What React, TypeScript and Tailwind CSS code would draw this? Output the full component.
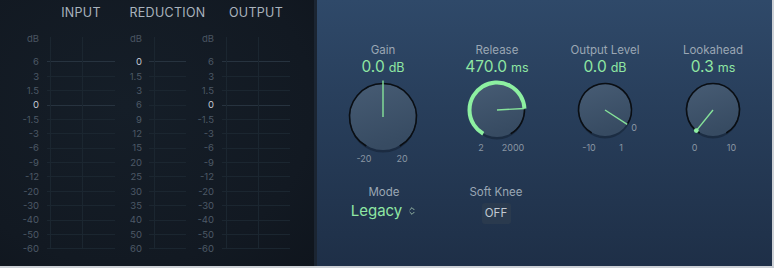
import React from 'react';
import { ChevronsUpDown } from 'lucide-react';

const IO_SCALE = ['6', '3', '1.5', '0', '-1.5', '-3', '-6', '-9', '-12', '-20', '-30', '-40', '-50', '-60'];
const RED_SCALE = ['0', '1.5', '3', '6', '9', '12', '15', '20', '25', '30', '35', '40', '50', '60'];

interface MeterProps {
  label: string;
  scale: string[];
  major: string[];
  zero: string;
  width: number;
  gap: number;
  verticals: number[];
  className?: string;
}

const Meter: React.FC<MeterProps> = ({ label, scale, major, zero, width, gap, verticals, className }) => (
  <div className={`flex flex-col ${className ?? ''}`}>
    <div className="flex h-[15px]">
      <div className="w-[24px] shrink-0" style={{ marginRight: gap }} />
      <div className="flex justify-center whitespace-nowrap text-[12.5px] leading-[15px] tracking-[0.3px] text-[#a9b3bd]" style={{ width }}>{label}</div>
    </div>
    <div className="flex mt-[12px]">
      {/* scale numbers */}
      <div className="w-[24px] shrink-0 flex flex-col items-end text-[9.5px] leading-none" style={{ marginRight: gap }}>
        <div className="h-[14px] flex items-center text-[#4a5562]">dB</div>
        <div className="h-[8.8px]" />
        {scale.map(n => (
          <div key={n} className={`h-[14.38px] flex items-center ${n === zero ? 'text-[#c3cad2]' : 'text-[#4d5966]'}`}>{n}</div>
        ))}
      </div>
      {/* grid */}
      <div className="relative" style={{ width }}>
        <div className="h-[14px]" />
        <div className="h-[8.8px]" />
        {scale.map(n => (
          <div key={n} className="h-[14.38px] flex items-center">
            <div className={`h-px w-full ${major.includes(n) ? 'bg-[#27333f]' : 'bg-[#1b2630]'}`} />
          </div>
        ))}
        {verticals.map(v => (
          <div key={v} className="absolute top-[5px] bottom-[7px] w-px bg-[#1b2630]" style={{ left: v }} />
        ))}
      </div>
    </div>
  </div>
);

const pt = (cx: number, cy: number, r: number, a: number) => {
  const rad = (a * Math.PI) / 180;
  return [cx + r * Math.sin(rad), cy - r * Math.cos(rad)];
};

const arc = (cx: number, cy: number, r: number, a1: number, a2: number) => {
  const [x1, y1] = pt(cx, cy, r, a1);
  const [x2, y2] = pt(cx, cy, r, a2);
  const large = a2 - a1 > 180 ? 1 : 0;
  return `M ${x1} ${y1} A ${r} ${r} 0 ${large} 1 ${x2} ${y2}`;
};

interface KnobProps {
  id: string;
  h: number;
  cy: number;
  r: number;
  angle: number;
  ringEnd?: number;
  greenArc?: boolean;
  needleOut?: number;
  dot?: boolean;
  mark?: string;
}

const Knob: React.FC<KnobProps> = ({ id, h, cy, r, angle, ringEnd = 150, greenArc, needleOut = 0, dot, mark }) => {
  const cx = 50;
  const [nx, ny] = pt(cx, cy, r + needleOut, angle);
  return (
    <svg width={100} height={h} viewBox={`0 0 100 ${h}`} className="block">
      <defs>
        <linearGradient id={id} x1="0" y1="0" x2="0.3" y2="1">
          <stop offset="0" stopColor="#475c74" />
          <stop offset="1" stopColor="#374b62" />
        </linearGradient>
      </defs>
      <circle cx={cx} cy={cy + 2} r={r} fill="rgba(10,18,28,0.35)" />
      <circle cx={cx} cy={cy} r={r - 0.5} fill={`url(#${id})`} />
      {greenArc ? (
        <>
          <path d={arc(cx, cy, r, angle, 150)} stroke="#0a0e13" strokeWidth={1.6} fill="none" />
          <path d={arc(cx, cy, r, -150, angle)} stroke="#8df0a1" strokeWidth={4} fill="none" strokeLinecap="butt" />
        </>
      ) : (
        <path d={arc(cx, cy, r, -150, ringEnd)} stroke="#0a0e13" strokeWidth={1.6} fill="none" />
      )}
      <line x1={cx} y1={cy} x2={nx} y2={ny} stroke="#86e39a" strokeWidth={1.4} />
      {dot && <circle cx={nx} cy={ny} r={2.4} fill="#8ef0a2" />}
      {mark && (
        <text x={nx + 4} y={ny + 7} fontSize={9} fill="#8d99a6" fontFamily="Inter, sans-serif">{mark}</text>
      )}
    </svg>
  );
};

interface ColProps {
  label: string;
  value: string;
  unit: string;
  min: string;
  max: string;
  spread: string;
  className?: string;
  children: React.ReactNode;
}

const KnobCol: React.FC<ColProps> = ({ label, value, unit, min, max, spread, className, children }) => (
  <div className={`w-[100px] flex flex-col items-center ${className ?? ''}`}>
    <div className="mt-[43px] h-[14px] text-[11.5px] leading-[14px] text-[#9ba7b4]">{label}</div>
    <div className="h-[19px] leading-[19px] text-[#8fe7a3]">
      <span className="text-[15.5px]">{value}</span>
      <span className="text-[12.5px] ml-[4px]">{unit}</span>
    </div>
    {children}
    <div className={`flex h-[12px] text-[9px] leading-[12px] text-[#8a96a3] ${spread}`}>
      <span className="w-[24px] text-center">{min}</span>
      <span className="w-[24px] text-center">{max}</span>
    </div>
  </div>
);

export default function App() {
  return (
    <div className="w-[774px] h-[268px] bg-[#cdd1d6]" style={{ fontFamily: 'Inter, "Liberation Sans", sans-serif' }}>
      <div className="w-[772px] h-[266px] flex overflow-hidden">
        {/* Meters */}
        <div className="w-[317px] h-full shrink-0 flex pt-[5px] pl-[15px] border-r-[3px] border-[#1b2532] bg-[radial-gradient(ellipse_at_40%_40%,#151e28_0%,#121922_70%,#0f151d_100%)]">
          <Meter label="INPUT" scale={IO_SCALE} major={['6', '0']} zero="0" width={68} gap={8} verticals={[3, 35]} />
          <Meter label="REDUCTION" scale={RED_SCALE} major={['0']} zero="0" width={37} gap={7} verticals={[5]} className="ml-[3px]" />
          <Meter label="OUTPUT" scale={IO_SCALE} major={['6', '0']} zero="0" width={68} gap={8} verticals={[4, 36]} className="ml-[4px]" />
        </div>

        {/* Controls */}
        <div className="flex-1 h-full flex flex-col bg-linear-to-b from-[#2f4969] to-[#1e2f47]">
          <div className="flex h-[185px] pl-[16px]">
            <KnobCol label="Gain" value="0.0" unit="dB" min="-20" max="20" spread="gap-[14px]">
              <Knob id="g1" h={77} cy={41} r={33.5} angle={0} needleOut={3} />
            </KnobCol>
            <KnobCol label="Release" value="470.0" unit="ms" min="2" max="2000" spread="gap-[8px]" className="ml-[14px]">
              <Knob id="g2" h={66} cy={34} r={27.5} angle={87} greenArc />
            </KnobCol>
            <KnobCol label="Output Level" value="0.0" unit="dB" min="-10" max="1" spread="gap-[8px]" className="ml-[8px]">
              <Knob id="g3" h={66} cy={34} r={26.5} angle={123} ringEnd={123} mark="0" />
            </KnobCol>
            <KnobCol label="Lookahead" value="0.3" unit="ms" min="0" max="10" spread="gap-[13px]" className="ml-[8px]">
              <Knob id="g4" h={66} cy={34} r={26.5} angle={-141} dot />
            </KnobCol>
          </div>

          <div className="flex pl-[17px]">
            <div className="w-[100px] flex flex-col items-center">
              <div className="h-[14px] text-[11.5px] leading-[14px] text-[#9ba7b4]">Mode</div>
              <div className="flex items-center mt-[1px] h-[21px] text-[#8fe7a3]">
                <span className="text-[15px] leading-[21px]">Legacy</span>
                <ChevronsUpDown size={10} strokeWidth={2} className="ml-[5px] text-[#a9cdb3]" />
              </div>
            </div>
            <div className="w-[100px] ml-[12px] flex flex-col items-center">
              <div className="h-[14px] text-[11.5px] leading-[14px] text-[#9ba7b4]">Soft Knee</div>
              <div className="mt-[4px] w-[29px] h-[21px] rounded-[3px] bg-[#2a3a4e] flex items-center justify-center text-[11.5px] text-[#c2cad3]">
                OFF
              </div>
            </div>
          </div>
        </div>
      </div>
    </div>
  );
}
